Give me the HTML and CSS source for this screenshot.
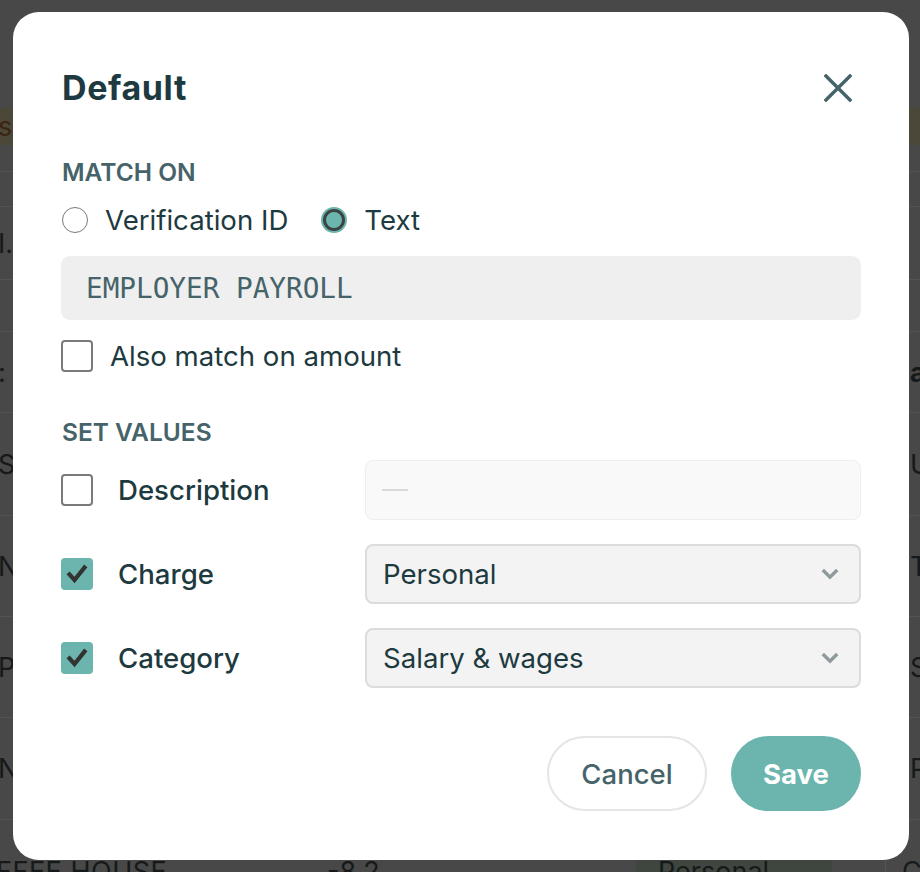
FILE: index.html
```html
<!DOCTYPE html>
<html lang="en">
<head>
<meta charset="utf-8">
<title>Default rule</title>
<link rel="stylesheet" href="styles.css">
</head>
<body>
<div class="page">
  <div class="bg-row top"></div>
  <div class="bg-row band"><span class="frag brown">s</span></div>
  <div class="bg-row h27"></div>
  <div class="bg-row h35"></div>
  <div class="bg-row h73"><span class="frag">I.</span></div>
  <div class="bg-row h52"></div>
  <div class="bg-row h81"><span class="frag">:</span><span class="frag-r bold">a</span></div>
  <div class="bg-row h103"><span class="frag">SI</span><span class="frag-r">U</span></div>
  <div class="bg-row h101"><span class="frag">N</span><span class="frag-r">T</span></div>
  <div class="bg-row h101"><span class="frag">PL</span><span class="frag-r">S</span></div>
  <div class="bg-row h102"><span class="frag">N</span><span class="frag-r">P</span></div>
  <div class="bg-row last">
    <span class="cell-name">FFEE HOUSE</span>
    <span class="cell-amt">-8.2</span>
    <span class="cell-chip">Personal ⌄</span>
    <span class="cell-sep"></span>
    <span class="cell-c">C</span>
  </div>
</div>

<div class="overlay">
  <div class="modal">
    <div class="modal-head">
      <h2 class="title">Default</h2>
      <button class="close" aria-label="Close">
        <svg width="28" height="28" viewBox="0 0 28 28"><path d="M2 2 L26 26 M26 2 L2 26" stroke="currentColor" stroke-width="3.4" stroke-linecap="square" fill="none"/></svg>
      </button>
    </div>

    <div class="section-label">MATCH ON</div>
    <div class="radios">
      <label class="radio-item"><span class="radio"></span>Verification ID</label>
      <label class="radio-item second"><span class="radio on"></span>Text</label>
    </div>
    <div class="text-field">EMPLOYER PAYROLL</div>
    <label class="check-item"><span class="checkbox"></span>Also match on amount</label>

    <div class="section-label set">SET VALUES</div>
    <div class="values">
      <div class="value-row">
        <span class="checkbox"></span>
        <span class="value-label">Description</span>
        <div class="field empty"><span class="dash"></span></div>
      </div>
      <div class="value-row">
        <span class="checkbox on"><svg width="32" height="32" viewBox="0 0 32 32"><path d="M8.5 16.5 L13.5 22 L23.5 9.5" stroke="#333" stroke-width="4.2" fill="none" stroke-linecap="square"/></svg></span>
        <span class="value-label">Charge</span>
        <div class="field select"><span>Personal</span><svg class="chev" width="18" height="12" viewBox="0 0 18 12"><path d="M1.8 2 L9 9.2 L16.2 2" stroke="currentColor" stroke-width="3.4" fill="none"/></svg></div>
      </div>
      <div class="value-row">
        <span class="checkbox on"><svg width="32" height="32" viewBox="0 0 32 32"><path d="M8.5 16.5 L13.5 22 L23.5 9.5" stroke="#333" stroke-width="4.2" fill="none" stroke-linecap="square"/></svg></span>
        <span class="value-label">Category</span>
        <div class="field select"><span>Salary &amp; wages</span><svg class="chev" width="18" height="12" viewBox="0 0 18 12"><path d="M1.8 2 L9 9.2 L16.2 2" stroke="currentColor" stroke-width="3.4" fill="none"/></svg></div>
      </div>
    </div>

    <div class="actions">
      <button class="btn cancel">Cancel</button>
      <button class="btn save">Save</button>
    </div>
  </div>
</div>
</body>
</html>
```

FILE: styles.css
```css
* { box-sizing: border-box; }
html, body { margin: 0; padding: 0; }
body {
  width: 920px;
  height: 872px;
  overflow: hidden;
  background: #484848;
  font-family: Inter, "Noto Sans", sans-serif;
}

/* background page (dimmed) */
.page {
  display: flex;
  flex-direction: column;
  height: 872px;
  overflow: hidden;
  color: #161919;
  font-size: 27px;
}
.bg-row {
  display: flex;
  align-items: center;
  justify-content: space-between;
  border-bottom: 1px solid #535353;
  overflow: hidden;
  flex: none;
}
.bg-row.top { height: 108px; border-bottom: none; }
.bg-row.band { height: 37px; background: #4c4839; border-bottom: none; }
.bg-row.h27 { height: 27px; }
.bg-row.h35 { height: 35px; }
.bg-row.h73 { height: 73px; }
.bg-row.h52 { height: 52px; }
.bg-row.h81 { height: 81px; }
.bg-row.h103 { height: 103px; }
.bg-row.h101 { height: 101px; }
.bg-row.h102 { height: 102px; }
.bg-row.last {
  height: 52px;
  align-items: flex-start;
  padding-top: 36px;
  border-bottom: none;
  justify-content: flex-start;
  line-height: 32px;
}
.frag { margin-left: -2px; }
.frag.brown { color: #3b2410; }
.frag-r { margin-right: -6px; width: 16px; }
.frag-r.bold { font-weight: 700; }
.cell-name { width: 331px; margin-left: -4px; letter-spacing: 0.5px; flex: none; }
.cell-amt { width: 309px; flex: none; }
.cell-chip { width: 196px; background: #3f4640; padding-left: 22px; border-radius: 4px; flex: none; }
.cell-sep { width: 1px; height: 40px; background: #555; margin-left: 53px; flex: none; }
.cell-c { margin-left: 16px; }

/* overlay + modal */
.overlay {
  position: fixed;
  inset: 0;
  display: flex;
  align-items: center;
  justify-content: center;
  padding-left: 2px;
}
.modal {
  width: 896px;
  background: #fff;
  border-radius: 26px;
  padding: 56px 48px 49px 48px;
  color: #1d3a40;
  font-size: 27.6px;
}
.modal-head {
  display: flex;
  align-items: center;
  justify-content: space-between;
  height: 40px;
}
.title {
  margin: 0;
  font-size: 34px;
  line-height: 40px;
  font-weight: 700;
  color: #1d3a40;
  letter-spacing: 0.6px;
  padding-left: 1px;
}
.close {
  border: none;
  background: none;
  padding: 0;
  margin-right: 9px;
  width: 28px;
  height: 28px;
  color: #46636a;
  display: flex;
}
.section-label {
  margin-top: 49px;
  font-size: 24.5px;
  line-height: 30px;
  font-weight: 600;
  color: #46636a;
  padding-left: 1px;
}
.section-label.set { margin-top: 43px; }

.radios {
  display: flex;
  align-items: center;
  margin-top: 15px;
  height: 36px;
  line-height: 36px;
}
.radio-item {
  display: flex;
  align-items: center;
  gap: 17px;
}
.radio-item.second { margin-left: 33px; }
.radio {
  width: 26px;
  height: 26px;
  border-radius: 50%;
  border: 1.5px solid #7a7a7a;
  background: #fff;
  margin-left: 1px;
}
.radio.on {
  width: 22px;
  height: 22px;
  margin: 0 2px;
  background: #6bb5ae;
  border: 3.5px solid #3d4242;
  box-shadow: 0 0 0 2px #6bb5ae;
}

.text-field {
  margin-top: 18px;
  height: 64px;
  background: #efefef;
  border-radius: 9px;
  display: flex;
  align-items: center;
  padding-left: 25px;
  font-family: "DejaVu Sans Mono", "Liberation Mono", monospace;
  font-size: 27.7px;
  color: #46636a;
}

.check-item {
  margin-top: 18px;
  display: flex;
  align-items: center;
  gap: 17px;
  height: 36px;
  line-height: 36px;
}
.checkbox {
  width: 32px;
  height: 32px;
  flex: none;
  border: 2px solid #7a7a7a;
  border-radius: 4px;
  background: #fff;
  display: flex;
}
.checkbox.on {
  background: #6bb5ae;
  border: none;
}

.values {
  margin-top: 13px;
  display: flex;
  flex-direction: column;
  gap: 24px;
}
.value-row {
  display: flex;
  align-items: center;
  height: 60px;
}
.value-label {
  flex: 1;
  margin-left: 25px;
  font-weight: 500;
  line-height: 36px;
}
.field {
  width: 496px;
  height: 60px;
  border-radius: 8px;
  display: flex;
  align-items: center;
}
.field.empty {
  background: #f9f9f9;
  border: 1.5px solid #eeeeee;
  padding-left: 16px;
}
.dash {
  width: 26px;
  height: 2px;
  background: #d6dadb;
}
.field.select {
  background: #f3f3f3;
  border: 2px solid #dcdcdc;
  padding: 0 20px 0 16px;
  justify-content: space-between;
  color: #1d3a40;
}
.chev { color: #8e9a9b; }

.actions {
  margin-top: 48px;
  display: flex;
  justify-content: flex-end;
  gap: 24px;
}
.btn {
  height: 75px;
  border-radius: 38px;
  font-family: Inter, "Noto Sans", sans-serif;
  font-size: 27.5px;
  cursor: pointer;
}
.btn.cancel {
  width: 160px;
  background: #fff;
  border: 2px solid #e5e5e5;
  color: #46636a;
  font-weight: 500;
}
.btn.save {
  width: 130px;
  background: #6bb5ae;
  border: none;
  color: #fff;
  font-weight: 700;
}
```
